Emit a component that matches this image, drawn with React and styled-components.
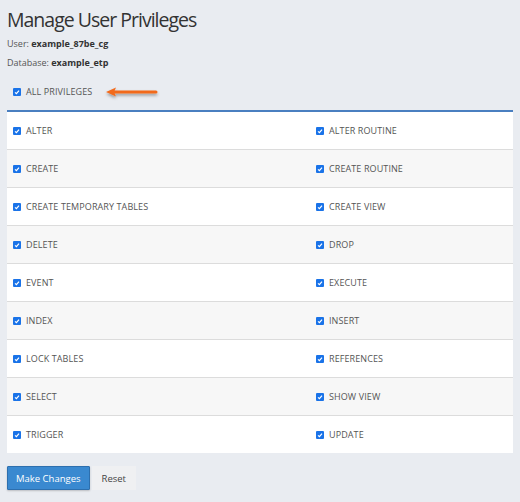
import React from 'react'
import styled, { createGlobalStyle } from 'styled-components'

const GlobalStyle = createGlobalStyle`
  html, body {
    margin: 0;
    padding: 0;
    background: #e9ecf1;
  }
  body {
    font-family: "Open Sans", "Liberation Sans", sans-serif;
    color: #333;
  }
`;

const Page = styled.div`
  padding: 5px 7px 12px 7px;
`;

const Title = styled.h1`
  margin: 0;
  font-size: 19.5px;
  font-weight: 400;
  letter-spacing: -1px;
  color: #333;
  line-height: 30px;
`;

const Meta = styled.p`
  margin: 1px 0 0 0;
  font-size: 9px;
  line-height: 16px;
  color: #555;
  & + & {
    margin-top: 3px;
  }
`;

const Value = styled.b`
  font-weight: 700;
  color: #333;
`;

const AllRow = styled.div`
  display: flex;
  align-items: center;
  padding: 14px 0 12px 6px;
  gap: 5px;
`;

const Label = styled.span`
  font-size: 9px;
  text-transform: uppercase;
  color: #555;
  letter-spacing: 0.1px;
`;

const Box = styled.span`
  display: inline-flex;
  align-items: center;
  justify-content: center;
  width: 8px;
  height: 8px;
  border-radius: 1px;
  background: #1a73e8;
  flex: none;
`;

const Arrow = styled.svg`
  margin-left: 9px;
  overflow: visible;
`;

const Table = styled.div`
  display: grid;
  grid-template-columns: 303px 1fr;
  background: #fff;
  border-top: 2px solid #4a7fc0;
`;

const Cell = styled.div`
  display: flex;
  align-items: center;
  gap: 5px;
  height: 37px;
  padding-left: 6px;
  border-bottom: ${p => (p.$last ? 'none' : '1px solid #dcdcdc')};
  background: ${p => (p.$odd ? '#f7f7f7' : '#fff')};
`;

const Actions = styled.div`
  display: flex;
  gap: 2px;
  margin-top: 13px;
`;

const Primary = styled.button`
  font-family: inherit;
  font-size: 9.5px;
  height: 24px;
  padding: 0 8px;
  color: #fff;
  background: #3a89d0;
  border: 1px solid #2d6fae;
  border-radius: 1px;
  box-shadow: 0 1px 2px rgba(0, 0, 0, 0.2);
`;

const Plain = styled.button`
  font-family: inherit;
  font-size: 9.5px;
  height: 24px;
  padding: 0 10px;
  color: #444;
  background: #eff0f2;
  border: none;
`;

function Check() {
  return (
    <Box>
      <svg width="6" height="6" viewBox="0 0 6 6">
        <path d="M1 3.4 L2.4 4.6 L5 1.6" fill="none" stroke="#fff" strokeWidth="1.2" />
      </svg>
    </Box>
  )
}

const privileges = [
  ['ALTER', 'ALTER ROUTINE'],
  ['CREATE', 'CREATE ROUTINE'],
  ['CREATE TEMPORARY TABLES', 'CREATE VIEW'],
  ['DELETE', 'DROP'],
  ['EVENT', 'EXECUTE'],
  ['INDEX', 'INSERT'],
  ['LOCK TABLES', 'REFERENCES'],
  ['SELECT', 'SHOW VIEW'],
  ['TRIGGER', 'UPDATE'],
]

export default function App() {
  return (
    <Page>
      <GlobalStyle />
      <Title>Manage User Privileges</Title>
      <Meta>User: <Value>example_87be_cg</Value></Meta>
      <Meta>Database: <Value>example_etp</Value></Meta>
      <AllRow>
        <Check />
        <Label>All Privileges</Label>
        <Arrow width="52" height="10" viewBox="0 0 52 10">
          <defs>
            <filter id="sh" x="-20%" y="-100%" width="140%" height="400%">
              <feDropShadow dx="0" dy="2" stdDeviation="1.5" floodColor="#000" floodOpacity="0.35" />
            </filter>
          </defs>
          <g filter="url(#sh)">
            <path d="M8 5 H50" stroke="#f26b1d" strokeWidth="3" strokeLinecap="round" />
            <path d="M0 5 L10 0.5 L8 5 L10 9.5 Z" fill="#f26b1d" />
          </g>
        </Arrow>
      </AllRow>
      <Table>
        {privileges.map(([a, b], i) => (
          <React.Fragment key={a}>
            <Cell $odd={i % 2 === 1} $last={i === privileges.length - 1}>
              <Check />
              <Label>{a}</Label>
            </Cell>
            <Cell $odd={i % 2 === 1} $last={i === privileges.length - 1}>
              <Check />
              <Label>{b}</Label>
            </Cell>
          </React.Fragment>
        ))}
      </Table>
      <Actions>
        <Primary>Make Changes</Primary>
        <Plain>Reset</Plain>
      </Actions>
    </Page>
  )
}
